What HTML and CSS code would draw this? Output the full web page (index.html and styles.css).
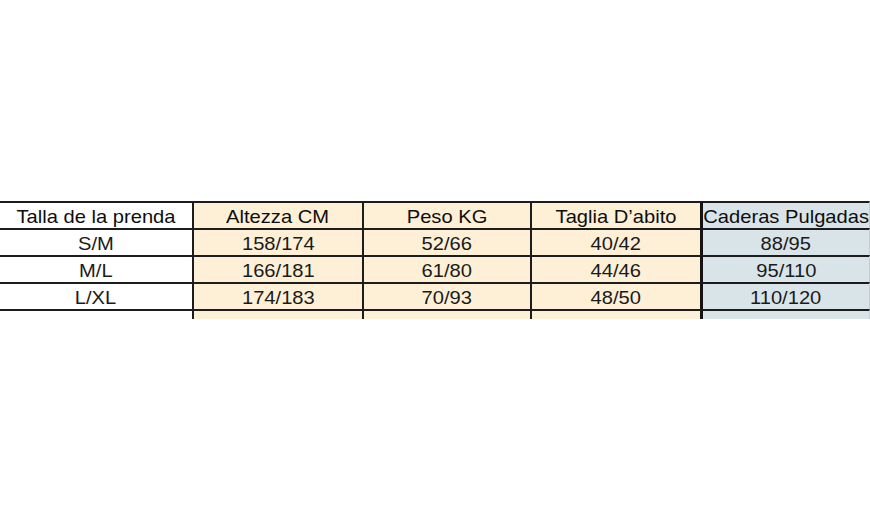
FILE: index.html
```html
<!DOCTYPE html>
<html>
<head>
<meta charset="utf-8">
<link rel="stylesheet" href="styles.css">
</head>
<body>
<div class="page">
  <table class="sizes">
    <colgroup>
      <col class="c1"><col class="c2"><col class="c3"><col class="c4"><col class="c5">
    </colgroup>
    <tr class="head">
      <td class="w"><span>Talla de la prenda</span></td>
      <td class="o"><span>Altezza CM</span></td>
      <td class="o"><span>Peso KG</span></td>
      <td class="o"><span>Taglia D’abito</span></td>
      <td class="b last"><span>Caderas Pulgadas</span></td>
    </tr>
    <tr>
      <td class="w"><span>S/M</span></td>
      <td class="o"><span>158/174</span></td>
      <td class="o"><span>52/66</span></td>
      <td class="o"><span>40/42</span></td>
      <td class="b last"><span>88/95</span></td>
    </tr>
    <tr>
      <td class="w"><span>M/L</span></td>
      <td class="o"><span>166/181</span></td>
      <td class="o"><span>61/80</span></td>
      <td class="o"><span>44/46</span></td>
      <td class="b last"><span>95/110</span></td>
    </tr>
    <tr>
      <td class="w"><span>L/XL</span></td>
      <td class="o"><span>174/183</span></td>
      <td class="o"><span>70/93</span></td>
      <td class="o"><span>48/50</span></td>
      <td class="b last"><span>110/120</span></td>
    </tr>
    <tr class="stub">
      <td class="w"><div class="fill"></div></td>
      <td class="o"><div class="fill"></div></td>
      <td class="o"><div class="fill"></div></td>
      <td class="o"><div class="fill"></div></td>
      <td class="b last"><div class="fill"></div></td>
    </tr>
  </table>
</div>
</body>
</html>
```

FILE: styles.css
```css
html, body {
  margin: 0;
  padding: 0;
  background: #ffffff;
}

.page {
  width: 870px;
  height: 524px;
  padding-top: 201px;
  box-sizing: border-box;
  overflow: hidden;
}

.sizes {
  width: 870px;
  border-collapse: separate;
  border-spacing: 0;
  table-layout: fixed;
  font-family: "Liberation Sans", Arial, sans-serif;
  font-size: 19px;
  color: #1a1a1a;
}

.c1 { width: 194px; }
.c2 { width: 170px; }
.c3 { width: 168px; }
.c4 { width: 171px; }
.c5 { width: 167px; }

.sizes td {
  padding: 3px 0 0 0;
  height: 22px;
  line-height: 22px;
  text-align: center;
  border-top: 2px solid #1c1c1c;
  border-right: 2px solid #1c1c1c;
  white-space: nowrap;
  overflow: visible;
}

.sizes td span {
  display: inline-block;
  transform: scaleX(1.06);
}

.sizes .head td {
  color: #0e0e0e;
}

.sizes td.w { background: #ffffff; }
.sizes td.o { background: #fdf0d6; }
.sizes td.b { background: #d9e4e9; }

.sizes td:nth-child(4) {
  border-right: 3px solid #141414;
}

.sizes td.last {
  border-right: 1px solid #c6cfd3;
}

.sizes .stub td {
  padding: 0;
  height: 8px;
  line-height: 0;
}

.fill {
  height: 8px;
}
```
